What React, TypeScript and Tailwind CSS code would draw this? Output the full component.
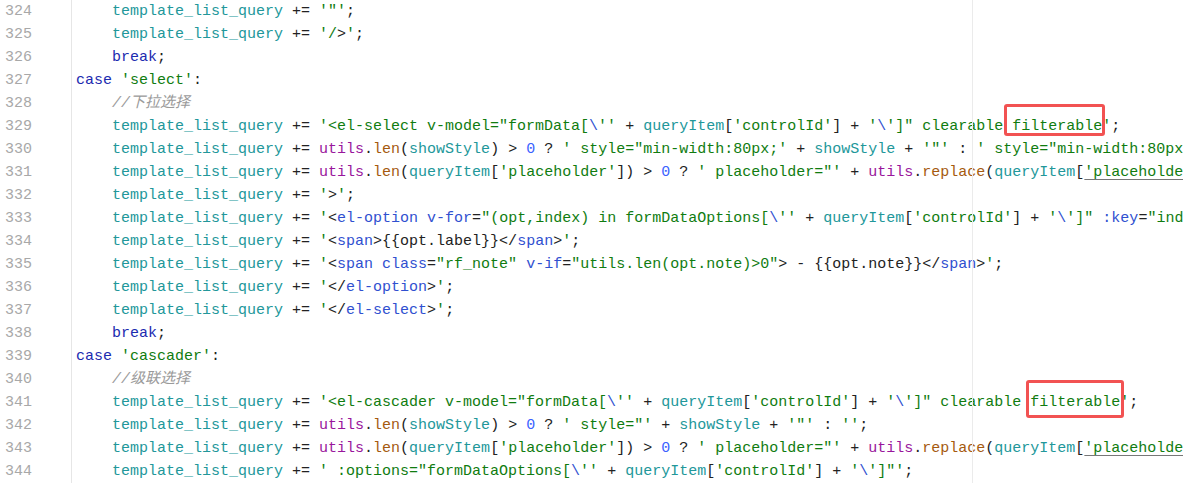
const C: Record<string, string> = {
  v: "text-[#22979a]",
  s: "text-[#107c10]",
  k: "text-[#1c2bb0]",
  t: "text-[#3050d0]",
  p: "text-[#222222]",
  u: "text-[#99169c]",
  f: "text-[#a55a0f]",
  n: "text-[#3a62ff]",
  c: "text-[#9a9a9a] italic",
  su: "text-[#107c10] underline decoration-[#777777] underline-offset-[3px]",
};

// red annotation marks drawn round a token
const MARK: Record<string, string> = {
  m1: "absolute left-[-8px] right-[-3px] top-[-11px] bottom-[2px] border-[3px] border-[#f25252] rounded-[3px]",
  m2: "absolute left-[-4px] right-[-4px] top-[-11px] bottom-[-4px] border-[3px] border-[#f25252] rounded-[3px]",
};

type Tok = [string, string, string?];
const T = "template_list_query";
const pre = (): Tok[] => [["v", T], ["p", " += "]];

const elOpen = (tag: string, mark: string): Tok[] => [
  ...pre(),
  ["s", `'<${tag} v-model="formData[`],
  ["t", "\\"],
  ["s", "''"],
  ["p", " + "],
  ["v", "queryItem"],
  ["p", "["],
  ["s", "'controlId'"],
  ["p", "]"],
  ["p", " + "],
  ["s", "'"],
  ["t", "\\"],
  ["s", "']\" clearable "],
  ["s", "filterable", mark],
  ["s", "'"],
  ["p", ";"],
];

const placeholderLine = (): Tok[] => [
  ...pre(),
  ["u", "utils"],
  ["p", "."],
  ["f", "len"],
  ["p", "("],
  ["v", "queryItem"],
  ["p", "["],
  ["s", "'placeholder'"],
  ["p", "]) > "],
  ["n", "0"],
  ["p", " ? "],
  ["s", "' placeholder=\"'"],
  ["p", " + "],
  ["u", "utils"],
  ["p", "."],
  ["f", "replace"],
  ["p", "("],
  ["v", "queryItem"],
  ["p", "["],
  ["su", "'placeholder'"],
  ["p", "], '\"', '')"],
];

const closeTag = (tag: string): Tok[] => [
  ...pre(),
  ["s", "'"],
  ["p", "</"],
  ["t", tag],
  ["p", ">"],
  ["s", "'"],
  ["p", ";"],
];

const LINES: { n: number; ind: number; toks: Tok[] }[] = [
  { n: 324, ind: 1, toks: [...pre(), ["s", "'\"'"], ["p", ";"]] },
  { n: 325, ind: 1, toks: [...pre(), ["s", "'/"], ["p", ">"], ["s", "'"], ["p", ";"]] },
  { n: 326, ind: 1, toks: [["k", "break"], ["p", ";"]] },
  { n: 327, ind: 0, toks: [["k", "case"], ["p", " "], ["s", "'select'"], ["p", ":"]] },
  { n: 328, ind: 1, toks: [["c", "//下拉选择"]] },
  { n: 329, ind: 1, toks: elOpen("el-select", "m1") },
  {
    n: 330,
    ind: 1,
    toks: [
      ...pre(),
      ["u", "utils"],
      ["p", "."],
      ["f", "len"],
      ["p", "("],
      ["v", "showStyle"],
      ["p", ") > "],
      ["n", "0"],
      ["p", " ? "],
      ["s", "' style=\"min-width:80px;'"],
      ["p", " + "],
      ["v", "showStyle"],
      ["p", " + "],
      ["s", "'\"'"],
      ["p", " : "],
      ["s", "' style=\"min-width:80px;\"'"],
      ["p", ";"],
    ],
  },
  { n: 331, ind: 1, toks: placeholderLine() },
  { n: 332, ind: 1, toks: [...pre(), ["s", "'"], ["p", ">"], ["s", "'"], ["p", ";"]] },
  {
    n: 333,
    ind: 1,
    toks: [
      ...pre(),
      ["s", "'"],
      ["p", "<"],
      ["t", "el-option v-for"],
      ["p", "="],
      ["s", "\"(opt,index) in formDataOptions["],
      ["t", "\\"],
      ["s", "''"],
      ["p", " + "],
      ["v", "queryItem"],
      ["p", "["],
      ["s", "'controlId'"],
      ["p", "]"],
      ["p", " + "],
      ["s", "'"],
      ["t", "\\"],
      ["s", "']\""],
      ["t", " :key"],
      ["p", "="],
      ["s", "\"index\"'"],
      ["p", ";"],
    ],
  },
  {
    n: 334,
    ind: 1,
    toks: [...pre(), ["s", "'"], ["p", "<"], ["t", "span"], ["p", ">{{opt.label}}</"], ["t", "span"], ["p", ">"], ["s", "'"], ["p", ";"]],
  },
  {
    n: 335,
    ind: 1,
    toks: [
      ...pre(),
      ["s", "'"],
      ["p", "<"],
      ["t", "span class"],
      ["p", "="],
      ["s", "\"rf_note\""],
      ["t", " v-if"],
      ["p", "="],
      ["s", "\"utils.len(opt.note)>0\""],
      ["p", "> - {{opt.note}}</"],
      ["t", "span"],
      ["p", ">"],
      ["s", "'"],
      ["p", ";"],
    ],
  },
  { n: 336, ind: 1, toks: closeTag("el-option") },
  { n: 337, ind: 1, toks: closeTag("el-select") },
  { n: 338, ind: 1, toks: [["k", "break"], ["p", ";"]] },
  { n: 339, ind: 0, toks: [["k", "case"], ["p", " "], ["s", "'cascader'"], ["p", ":"]] },
  { n: 340, ind: 1, toks: [["c", "//级联选择"]] },
  { n: 341, ind: 1, toks: elOpen("el-cascader", "m2") },
  {
    n: 342,
    ind: 1,
    toks: [
      ...pre(),
      ["u", "utils"],
      ["p", "."],
      ["f", "len"],
      ["p", "("],
      ["v", "showStyle"],
      ["p", ") > "],
      ["n", "0"],
      ["p", " ? "],
      ["s", "' style=\"'"],
      ["p", " + "],
      ["v", "showStyle"],
      ["p", " + "],
      ["s", "'\"'"],
      ["p", " : "],
      ["s", "''"],
      ["p", ";"],
    ],
  },
  { n: 343, ind: 1, toks: placeholderLine() },
  {
    n: 344,
    ind: 1,
    toks: [
      ...pre(),
      ["s", "' :options=\"formDataOptions["],
      ["t", "\\"],
      ["s", "''"],
      ["p", " + "],
      ["v", "queryItem"],
      ["p", "["],
      ["s", "'controlId'"],
      ["p", "]"],
      ["p", " + "],
      ["s", "'"],
      ["t", "\\"],
      ["s", "']\"'"],
      ["p", ";"],
    ],
  },
];

export default function App() {
  return (
    <div className="w-[1183px] h-[484px] overflow-hidden bg-white font-['Liberation_Mono','Noto_Sans_CJK_SC',monospace] text-[15px]">
      <div className="flex">
        <div className="w-[72px] shrink-0 border-r border-[#e6e6e6] pl-[5px]">
          {LINES.map(l => (
            <div key={l.n} className="h-[23px] leading-[23px] text-[#a8a8a8]">{l.n}</div>
          ))}
        </div>
        <div className="relative flex-1 pl-[4px] overflow-hidden">
          {/* print margin guide */}
          <div className="absolute top-0 bottom-0 left-[900px] w-px bg-[#ebebeb]" />
          {LINES.map(l => (
            <div key={l.n} className={`h-[23px] leading-[23px] whitespace-pre ${l.ind ? "pl-[36px]" : ""}`}>
              {l.toks.map(([k, txt, mark], i) =>
                mark ? (
                  <span key={i} className={`relative inline-block h-[23px] align-top ${C[k]}`}>
                    {txt}
                    <span className={MARK[mark]} />
                  </span>
                ) : (
                  <span key={i} className={C[k]}>{txt}</span>
                )
              )}
            </div>
          ))}
        </div>
      </div>
    </div>
  );
}
